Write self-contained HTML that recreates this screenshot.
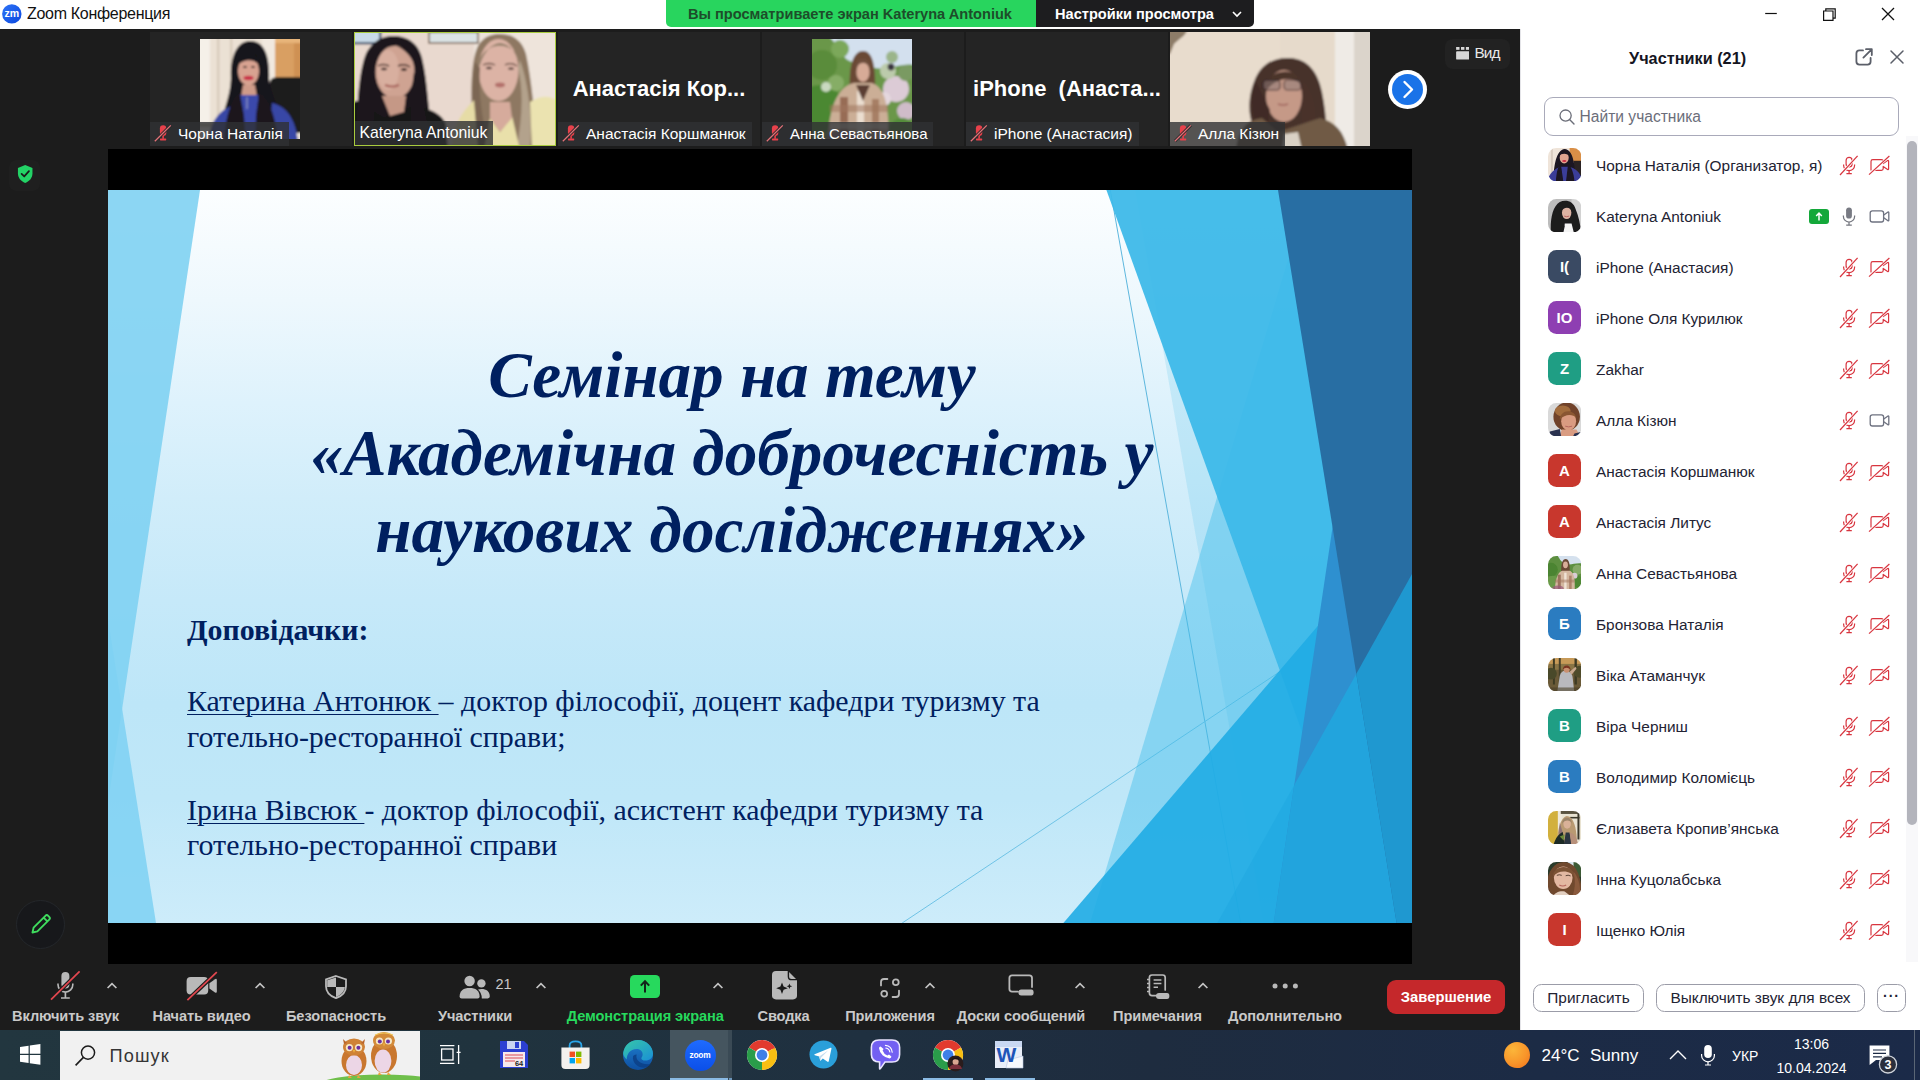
<!DOCTYPE html>
<html lang="ru">
<head>
<meta charset="utf-8">
<title>Zoom Конференция</title>
<style>
*{box-sizing:border-box;margin:0;padding:0}
html,body{width:1920px;height:1080px;overflow:hidden;background:#1c1c1c;font-family:"Liberation Sans",sans-serif;}
#root{position:relative;width:1920px;height:1080px;overflow:hidden;background:#1c1c1c;}
.abs{position:absolute}
.t{position:absolute;white-space:nowrap;line-height:1}
/* title bar */
#titlebar{left:0;top:0;width:1920px;height:29px;background:#fff}
/* main */
#main{left:0;top:29px;width:1520px;height:1001px;background:#1c1c1c}
/* panel */
#panel{left:1520px;top:29px;width:400px;height:1001px;background:#fff;border-left:1px solid #e4e4e8}
/* taskbar */
#taskbar{left:0;top:1030px;width:1920px;height:50px;background:#1f2c3b}
/* share */
#shareblack{left:108px;top:149px;width:1304px;height:815px;background:#000}
#slide{left:108px;top:190px;width:1304px;height:733px;overflow:hidden;background:linear-gradient(180deg,#fcfeff 0%,#eef8fd 15%,#def2fc 29%,#d1edfa 42%,#c6e9f9 56%,#bde6f8 70%,#bfe7f8 83%,#cdecfa 100%)}
/* thumbs */
.thumb{position:absolute;top:32px;width:202px;height:114.4px;background:#242424;overflow:hidden}
.nm{position:absolute;left:0;bottom:0;height:24px;background:rgba(47,49,51,.80);color:#fff;font-size:15.5px;line-height:24px;white-space:nowrap;padding:0 6px 0 28px}
.nm.nomic{padding-left:6px}
.bigname{position:absolute;left:0;right:0;top:44px;text-align:center;color:#fff;font-weight:bold;font-size:22px;white-space:nowrap;line-height:26px}

.stitle{position:absolute;left:0;width:1248px;text-align:center;font-family:"Liberation Serif",serif;font-weight:bold;font-style:italic;font-size:65.2px;line-height:77.25px;color:#002060;white-space:nowrap}
.sbody{position:absolute;left:79px;font-family:"Liberation Serif",serif;font-size:29.9px;line-height:36px;color:#002060;white-space:nowrap}
.sbody u{text-decoration-thickness:1.2px;text-underline-offset:3px}

.tl{position:absolute;top:1008px;width:200px;text-align:center;font-size:14.6px;line-height:16px;font-weight:bold;white-space:nowrap;letter-spacing:-0.1px}

.av{position:absolute;left:1547.8px;width:33.4px;height:33.4px;margin-top:.4px;border-radius:8.5px;color:#fff;font-weight:bold;font-size:15px;line-height:33.4px;text-align:center}
.pn{position:absolute;left:1596px;font-size:15.4px;line-height:20px;color:#232333;white-space:nowrap}
.pbtn{position:absolute;top:983.5px;height:28.5px;border:1px solid #9b9ca8;border-radius:8.5px;background:#fff;color:#232333;font-size:15.4px;line-height:26px;text-align:center;white-space:nowrap}
</style>
</head>
<body>
<div id="root">
<svg width="0" height="0" style="position:absolute"><defs><filter id="avb" x="-10%" y="-10%" width="120%" height="120%"><feGaussianBlur stdDeviation="0.45"/></filter></defs></svg>

<!-- ===== TITLE BAR ===== -->
<div id="titlebar" class="abs"></div>
<svg class="abs" style="left:2px;top:3px" width="21" height="21" viewBox="0 0 21 21"><defs><linearGradient id="zg" x1="0" y1="0" x2="1" y2="1"><stop offset="0" stop-color="#2f74f7"/><stop offset="1" stop-color="#0a47de"/></linearGradient></defs><circle cx="9.8" cy="10.9" r="9.7" fill="url(#zg)"/><text x="9.9" y="14.3" font-family="Liberation Sans" font-size="10.6" font-weight="bold" fill="#fff" text-anchor="middle">zm</text></svg>
<div class="t" id="ttl" style="left:27px;top:6.4px;font-size:16px;letter-spacing:-.3px;color:#111">Zoom Конференция</div>
<div class="abs" style="left:666px;top:0;width:370px;height:27px;background:#28d55e;border-radius:0 0 0 5px"></div>
<div class="t" id="ban1" style="left:688px;top:7px;font-size:14.6px;font-weight:bold;color:#1d4d2a">Вы просматриваете экран Kateryna Antoniuk</div>
<div class="abs" style="left:1036px;top:0;width:218px;height:27px;background:#1d1d1f;border-radius:0 0 5px 0"></div>
<div class="t" id="ban2" style="left:1055px;top:7px;font-size:14.6px;font-weight:bold;color:#fff">Настройки просмотра</div>
<svg class="abs" style="left:1231px;top:9px" width="12" height="10" viewBox="0 0 12 10"><path d="M2 3L6 7L10 3" fill="none" stroke="#fff" stroke-width="1.6"/></svg>
<svg class="abs" style="left:1760px;top:4px" width="140" height="20" viewBox="0 0 140 20"><path d="M5.2 9.5H16.8" stroke="#111" stroke-width="1.2"/><path d="M63.6 7H73V16.4H63.6Z M65.8 7V4.8H75.2V14.2H73" fill="none" stroke="#111" stroke-width="1.2"/><path d="M122 4L134 16M134 4L122 16" stroke="#111" stroke-width="1.3"/></svg>


<!-- ===== MAIN DARK AREA ===== -->
<div id="main" class="abs"></div>

<!-- ===== SHARED SCREEN ===== -->
<div id="shareblack" class="abs"></div>
<div id="slide" class="abs">
<svg class="abs" style="left:0;top:0" width="1304" height="733" viewBox="0 0 1304 733">
<defs>
<clipPath id="cR28"><polygon points="1274.7,0 1304,0 1304,733 1165.7,733"/></clipPath>
<clipPath id="cR29"><polygon points="1170,0 1304,0 1304,733 1288.6,733"/></clipPath>
</defs>
<!-- left facet -->
<polygon points="0,0 92,0 0,613" fill="#7fd1f2" fill-opacity=".9"/>
<polygon points="0,429.2 48,733 0,733" fill="#7fd1f2" fill-opacity=".88"/>
<!-- thin lines -->
<line x1="1002.3" y1="0" x2="1132.7" y2="733" stroke="#5db7de" stroke-width="1"/>
<line x1="1304" y1="393.7" x2="794.2" y2="733" stroke="#6fc3e6" stroke-width="1"/>
<!-- Rect23 / Rect25 light -->
<polygon points="1200.8,0 1304,0 1304,733 982,733" fill="#40bdeb" fill-opacity=".44"/>
<polygon points="1027.1,0 1304,0 1304,733 1155.7,733" fill="#40bdeb" fill-opacity=".18"/>
<!-- Rect27 mid blue -->
<polygon points="998.4,0 1304,0 1304,733 1263,733" fill="#3db9e9" fill-opacity=".94"/>
<!-- Tri23 big triangle -->
<polygon points="1304,326 1304,733 955.4,733" fill="#20ace4" fill-opacity=".9"/>
<!-- Tri27 subtle left part -->
<polygon points="1304,383.9 1304,733 1109.3,733" fill="#1aa3de" fill-opacity=".35"/>
<!-- Rect28 -->
<polygon points="1274.7,0 1304,0 1304,733 1165.7,733" fill="#2e90d0"/>
<polygon points="1304,383.9 1304,733 1109.3,733" fill="#22a4dd" clip-path="url(#cR28)"/>
<!-- Rect29 dark -->
<polygon points="1170,0 1304,0 1304,733 1288.6,733" fill="#286ea3"/>
<polygon points="1304,383.9 1304,733 1109.3,733" fill="#1f98d0" clip-path="url(#cR29)"/>
</svg>
<div class="stitle" style="top:147.4px">Семінар на тему</div>
<div class="stitle" style="top:224.6px">«Академічна доброчесність у</div>
<div class="stitle" style="top:301.9px">наукових дослідженнях»</div>
<div class="sbody" style="top:422px"><b>Доповідачки:</b></div>
<div class="sbody" style="top:493.2px"><u>Катерина Антонюк </u>– доктор філософії, доцент кафедри туризму та</div>
<div class="sbody" style="top:529.4px">готельно-ресторанної справи;</div>
<div class="sbody" style="top:601.9px"><u>Ірина Вівсюк </u>- доктор філософії, асистент кафедри туризму та</div>
<div class="sbody" style="top:636.9px">готельно-ресторанної справи</div>

</div>

<!-- ===== THUMBNAILS ===== -->

<!-- thumb 1 -->
<div class="thumb" style="left:150px">
<svg class="abs" style="left:50px;top:7px" width="100" height="100" viewBox="0 0 100 100">
<defs><filter id="bl1" x="-10%" y="-10%" width="120%" height="120%"><feGaussianBlur stdDeviation="1.1"/></filter></defs>
<g filter="url(#bl1)">
<rect x="-10" y="-10" width="120" height="120" fill="#ebe1d4"/>
<rect x="-10" y="-10" width="20" height="120" fill="#f5f0e9"/><rect x="17" y="-10" width="2.4" height="120" fill="#d8cbbb"/><rect x="30" y="-10" width="2.4" height="120" fill="#d9ccbc"/><rect x="62" y="-10" width="14" height="60" fill="#f1e9df"/>
<rect x="75" y="-10" width="40" height="50" fill="#d99f62"/><rect x="75" y="-10" width="40" height="14" fill="#e8b57a"/><rect x="94" y="4" width="20" height="36" fill="#cf9152"/>
<path d="M70 44Q70 38 78 38H110V94H70Z" fill="#1e1b1c"/>
<rect x="-10" y="84" width="40" height="4" fill="#c9bba8"/>
<path d="M31 40C30 12 40 2 50 2C62 2 70 12 69 40C72 60 82 72 84 94L20 94C22 72 30 60 31 40Z" fill="#19131a"/>
<ellipse cx="48.5" cy="32" rx="10.5" ry="14.5" fill="#d8a391"/>
<path d="M36 28C38 9 61 9 62 29C56 19 43 19 36 28Z" fill="#19131a"/>
<ellipse cx="45" cy="28" rx="2" ry="1" fill="#3a2a2a"/><ellipse cx="53" cy="28" rx="2" ry="1" fill="#3a2a2a"/>
<ellipse cx="48.5" cy="39" rx="5" ry="2.2" fill="#c92f46"/>
<path d="M43 46H55L57 58H41Z" fill="#cf9b89"/>
<path d="M8 104C10 78 24 68 36 66L34 104Z" fill="#3947a6"/><path d="M72 64C88 68 96 82 98 104L68 104Z" fill="#3947a6"/>
<path d="M40 56L58 56L64 104L34 104Z" fill="#3b49ab"/>
<path d="M24 104C25 76 32 58 40 54L44 76L46 104Z" fill="#1b161b"/><path d="M78 104C76 76 68 58 59 54L56 76L55 104Z" fill="#1b161b"/>
<path d="M47 58V70" stroke="#c9c9d6" stroke-width=".8"/>
</g></svg>
<div class="nm"><svg class="abs" style="left:4px;top:2px" width="19" height="19" viewBox="0 0 19 19"><rect x="5.9" y="1.3" width="6.4" height="10.6" rx="3.2" fill="#e8414b"/><rect x="8.3" y="11.6" width="1.6" height="3.2" fill="#e8414b"/><rect x="6" y="14.4" width="6.2" height="2" rx=".6" fill="#e8414b"/><path d="M0.8 17.2L16.8 1.4" stroke="#2a2a2a" stroke-width="3"/><path d="M0.8 17.2L16.8 1.4" stroke="#e2727a" stroke-width="1.3"/></svg>Чорна Наталія</div>
</div>
<!-- thumb 2 active -->
<div class="thumb" style="left:354px;background:#e6d6cb">
<svg class="abs" style="left:0;top:0" width="202" height="115" viewBox="0 0 202 115">
<defs><filter id="bl2" x="-10%" y="-10%" width="120%" height="120%"><feGaussianBlur stdDeviation="0.9"/></filter></defs>
<g filter="url(#bl2)">
<rect x="-10" y="-10" width="222" height="135" fill="#e9d9cf"/>
<rect x="120" y="-10" width="92" height="90" fill="#eee4db"/>
<rect x="-10" y="-10" width="36" height="21" fill="#c9dbe8"/><rect x="-10" y="10" width="36" height="2.4" fill="#4e5f78"/><rect x="25" y="-10" width="2.4" height="22" fill="#4e5f78"/>
<rect x="75" y="0" width="49" height="11" fill="#dbe4e6" stroke="#6f5b4a" stroke-width="1.4"/>
<!-- left woman -->
<path d="M3 115C2 70 6 30 14 18C22 6 32 4 40 4C52 4 64 10 68 26C74 50 74 80 80 115Z" fill="#1b181b"/>
<ellipse cx="41" cy="40" rx="19.5" ry="26.5" fill="#cfa392"/>
<ellipse cx="34" cy="38" rx="11" ry="20" fill="#d9b2a2" opacity=".8"/>
<path d="M20 34C22 8 60 6 62 36C56 20 46 14 38 13C30 14 24 22 20 34Z" fill="#1b181b"/>
<path d="M24 34Q29 31 35 34" stroke="#3a2622" stroke-width="1.4" fill="none"/><path d="M44 34Q50 31 56 35" stroke="#3a2622" stroke-width="1.4" fill="none"/>
<ellipse cx="30" cy="37" rx="3" ry="1.3" fill="#2a1c1c"/><ellipse cx="50" cy="37.6" rx="3" ry="1.3" fill="#2a1c1c"/>
<path d="M31 53Q38 56 45 53" stroke="#a8645c" stroke-width="2" fill="none"/>
<path d="M-4 118L-4 72C4 66 10 70 14 76L30 86L60 74C76 76 88 82 92 92L94 118Z" fill="#151316"/>
<path d="M28 64L52 64L50 80L36 84Z" fill="#c59886"/>
<path d="M4 115C0 90 4 60 10 40L22 60L18 115Z" fill="#1b181b"/><path d="M60 40C68 60 70 80 80 115L58 115L56 70Z" fill="#1b181b"/>
<!-- right woman -->
<path d="M120 118C116 70 116 30 124 14C130 4 138 2 146 2C158 2 168 8 172 22C178 50 180 80 184 118Z" fill="#8e7862"/>
<ellipse cx="144.500" cy="38" rx="20" ry="31" fill="#dcb3a5"/>
<path d="M124 40C122 6 168 4 168 40C164 22 156 12 146 11C136 12 128 22 124 40Z" fill="#93806a"/>
<path d="M121 30C116 60 118 90 126 118L136 118C128 90 124 60 126 36Z" fill="#7c6652"/>
<path d="M166 28C176 56 178 90 176 118L162 118C168 90 170 60 164 36Z" fill="#b3a28c"/>
<path d="M129 33Q135 30 141 33" stroke="#5a4238" stroke-width="1.3" fill="none"/><path d="M151 33Q157 30 163 34" stroke="#5a4238" stroke-width="1.3" fill="none"/>
<ellipse cx="135" cy="36" rx="3" ry="1.2" fill="#4a3630"/><ellipse cx="157" cy="36.600" rx="3" ry="1.2" fill="#4a3630"/>
<ellipse cx="146" cy="53" rx="5" ry="2.4" fill="#b3706a"/>
<path d="M98 118C98 98 104 84 120 68L124 118Z" fill="#e6dca6"/><path d="M176 70C188 62 198 64 206 70L206 118L178 118Z" fill="#ebe3b0"/>
<path d="M130 118L136 86L146 100L158 84L166 118Z" fill="#e9e0aa"/>
<path d="M136 70L156 70L158 86L146 100L136 86Z" fill="#d6ab9c"/>
</g></svg>
<div class="abs" style="left:0;top:0;width:202px;height:114.4px;border:1.5px solid #a9cb3e"></div>
<div class="nm nomic" style="left:1px;bottom:1px;height:24px;font-size:15.75px;padding-left:4.5px">Kateryna Antoniuk</div>
</div>
<!-- thumb 3 -->
<div class="thumb" style="left:558px">
<div class="bigname">Анастасія Кор...</div>
<div class="nm"><svg class="abs" style="left:4px;top:2px" width="19" height="19" viewBox="0 0 19 19"><rect x="5.9" y="1.3" width="6.4" height="10.6" rx="3.2" fill="#e8414b"/><rect x="8.3" y="11.6" width="1.6" height="3.2" fill="#e8414b"/><rect x="6" y="14.4" width="6.2" height="2" rx=".6" fill="#e8414b"/><path d="M0.8 17.2L16.8 1.4" stroke="#2a2a2a" stroke-width="3"/><path d="M0.8 17.2L16.8 1.4" stroke="#e2727a" stroke-width="1.3"/></svg>Анастасія Коршманюк</div>
</div>
<!-- thumb 4 -->
<div class="thumb" style="left:762px">
<svg class="abs" style="left:50px;top:7px" width="100" height="100" viewBox="0 0 100 100">
<defs><filter id="bl4" x="-10%" y="-10%" width="120%" height="120%"><feGaussianBlur stdDeviation="1.1"/></filter></defs>
<g filter="url(#bl4)">
<rect x="-10" y="-10" width="120" height="120" fill="#6a9748"/>
<path d="M12 -10L110 -10L110 28C90 20 78 34 60 28C44 22 36 26 30 14C26 6 18 0 12 -10Z" fill="#d3e0ee"/>
<circle cx="10" cy="26" r="15" fill="#5a8c3a"/><circle cx="8" cy="70" r="24" fill="#4c8832"/><circle cx="28" cy="10" r="9" fill="#7ba85a"/><circle cx="24" cy="44" r="8" fill="#86ad66"/><circle cx="14" cy="48" r="5" fill="#c9d9c0"/>
<circle cx="84" cy="50" r="13" fill="#dccbd6"/><circle cx="94" cy="72" r="9" fill="#cfbcc9"/><circle cx="76" cy="32" r="8" fill="#bccbab"/><circle cx="90" cy="92" r="13" fill="#548e3a"/><circle cx="72" cy="60" r="7" fill="#e4d7de"/><circle cx="94" cy="34" r="8" fill="#7a9a62"/><circle cx="80" cy="18" r="6" fill="#9bb58a"/>
<circle cx="79" cy="28" r="3.4" fill="#3b3540"/>
<path d="M38 56C36 24 42 12 51 12C60 12 64 24 63 56Z" fill="#6a4836"/>
<ellipse cx="51" cy="33" rx="6.6" ry="10" fill="#d7ab97"/>
<path d="M43 30C44 16 58 16 59 31C56 22 47 22 43 30Z" fill="#70503c"/>
<path d="M16 104C16 62 30 46 42 44L60 44C72 48 78 66 76 104Z" fill="#cbae96"/>
<rect x="28" y="58" width="8" height="46" fill="#85563f" opacity=".75"/><rect x="45" y="52" width="7" height="52" fill="#f1e6da" opacity=".85"/><rect x="60" y="60" width="7" height="44" fill="#94654c" opacity=".65"/><rect x="18" y="66" width="58" height="7" fill="#a1765e" opacity=".55"/><rect x="18" y="84" width="58" height="6" fill="#f3e9de" opacity=".65"/>
<path d="M44 46L51 62L58 46Z" fill="#5a3c30"/>
<ellipse cx="30" cy="98" rx="16" ry="6" fill="#7d5a72" opacity=".7"/>
</g></svg>
<div class="nm"><svg class="abs" style="left:4px;top:2px" width="19" height="19" viewBox="0 0 19 19"><rect x="5.9" y="1.3" width="6.4" height="10.6" rx="3.2" fill="#e8414b"/><rect x="8.3" y="11.6" width="1.6" height="3.2" fill="#e8414b"/><rect x="6" y="14.4" width="6.2" height="2" rx=".6" fill="#e8414b"/><path d="M0.8 17.2L16.8 1.4" stroke="#2a2a2a" stroke-width="3"/><path d="M0.8 17.2L16.8 1.4" stroke="#e2727a" stroke-width="1.3"/></svg><span style="font-size:15px">Анна Севастьянова</span></div>
</div>
<!-- thumb 5 -->
<div class="thumb" style="left:966px">
<div class="bigname">iPhone&nbsp; (Анаста...</div>
<div class="nm"><svg class="abs" style="left:4px;top:2px" width="19" height="19" viewBox="0 0 19 19"><rect x="5.9" y="1.3" width="6.4" height="10.6" rx="3.2" fill="#e8414b"/><rect x="8.3" y="11.6" width="1.6" height="3.2" fill="#e8414b"/><rect x="6" y="14.4" width="6.2" height="2" rx=".6" fill="#e8414b"/><path d="M0.8 17.2L16.8 1.4" stroke="#2a2a2a" stroke-width="3"/><path d="M0.8 17.2L16.8 1.4" stroke="#e2727a" stroke-width="1.3"/></svg>iPhone (Анастасия)</div>
</div>
<!-- thumb 6 -->
<div class="thumb" style="left:1170px;width:200px;background:#e4d8c8">
<svg class="abs" style="left:0;top:0" width="200" height="115" viewBox="0 0 200 115">
<defs><filter id="bl6" x="-10%" y="-10%" width="120%" height="120%"><feGaussianBlur stdDeviation="0.9"/></filter></defs>
<g filter="url(#bl6)">
<rect x="-10" y="-10" width="220" height="135" fill="#e6dacb"/>
<rect x="-10" y="-10" width="120" height="135" fill="#e8dccd"/>
<rect x="165" y="-10" width="19" height="135" fill="#efebe6"/><rect x="184" y="-10" width="26" height="135" fill="#dbd4cb"/>
<path d="M-4 -4L18 -4C16 4 10 6 4 12L0 22L-4 22Z" fill="#8d7c68"/>
<path d="M84 96C76 80 80 60 84 50C90 32 104 25 120 26C138 27 148 40 152 60C156 80 158 100 154 118L96 118C90 110 86 104 84 96Z" fill="#47312a"/>
<ellipse cx="114" cy="64" rx="18" ry="26" fill="#c59987"/>
<path d="M95 60C94 36 130 30 136 58C128 44 108 42 95 60Z" fill="#4b342c"/>
<path d="M86 50C78 70 82 92 96 104L100 78Z" fill="#402b25"/><path d="M134 50C146 64 148 90 142 110L132 88Z" fill="#4a332c"/>
<rect x="93" y="48" width="17" height="10" rx="3.4" fill="#8d7a78" opacity=".55" stroke="#35262a" stroke-width="1.7"/><rect x="114" y="48" width="17" height="10" rx="3.4" fill="#8d7a78" opacity=".5" stroke="#35262a" stroke-width="1.7"/>
<path d="M108 72Q113 74 118 72" stroke="#a0645c" stroke-width="1.6" fill="none"/>
<path d="M66 118C68 96 78 88 92 86L108 100L150 86C166 90 174 100 178 118Z" fill="#6f5a44"/>
<path d="M112 118L114 102L128 100L132 118Z" fill="#dad2c6"/>
</g></svg>
<div class="nm"><svg class="abs" style="left:4px;top:2px" width="19" height="19" viewBox="0 0 19 19"><rect x="5.9" y="1.3" width="6.4" height="10.6" rx="3.2" fill="#e8414b"/><rect x="8.3" y="11.6" width="1.6" height="3.2" fill="#e8414b"/><rect x="6" y="14.4" width="6.2" height="2" rx=".6" fill="#e8414b"/><path d="M0.8 17.2L16.8 1.4" stroke="#2a2a2a" stroke-width="3"/><path d="M0.8 17.2L16.8 1.4" stroke="#e2727a" stroke-width="1.3"/></svg>Алла Кізюн</div>
</div>
<!-- next arrow -->
<div class="abs" style="left:1387.9px;top:70px;width:39.2px;height:39.2px;border-radius:50%;background:#fff"></div>
<div class="abs" style="left:1391.7px;top:73.800px;width:31.6px;height:31.6px;border-radius:50%;background:#1a73e8"></div>
<svg class="abs" style="left:1390px;top:72px" width="35" height="35" viewBox="0 0 35 35"><path d="M14.5 10L22 17.5L14.5 25" fill="none" stroke="#fff" stroke-width="2.4" stroke-linecap="round" stroke-linejoin="round"/></svg>
<!-- view btn -->
<div class="abs" style="left:1445px;top:39px;width:65px;height:30px;border-radius:8px;background:#222"></div>
<svg class="abs" style="left:1455.8px;top:47px" width="13.4" height="12.6" viewBox="0 0 14 13.400"><rect x="0" y="0" width="3.6" height="3" fill="#d8d8d8"/><rect x="5.2" y="0" width="3.6" height="3" fill="#d8d8d8"/><rect x="10.4" y="0" width="3.6" height="3" fill="#d8d8d8"/><rect x="0" y="4.4" width="14" height="9" rx="1" fill="#d8d8d8"/></svg>
<div class="t" style="left:1474.5px;top:45px;font-size:15.4px;letter-spacing:-.9px;color:#e8e8e8">Вид</div>
<!-- shield -->
<div class="abs" style="left:9px;top:159.500px;width:31px;height:31px;border-radius:7px;background:#1f1f1f"></div>
<svg class="abs" style="left:15.8px;top:164px" width="18.4" height="20.2" viewBox="0 0 21 23"><path d="M10.5 1.2L18.8 4.4V10.5C18.8 15.6 15.6 19.6 10.5 21.6C5.4 19.6 2.2 15.6 2.2 10.5V4.4Z" fill="#23d366"/><path d="M6.4 11.2L9.4 14.2L14.8 8.2" fill="none" stroke="#1a1a1a" stroke-width="2" stroke-linecap="round" stroke-linejoin="round"/></svg>
<!-- pencil -->
<div class="abs" style="left:16px;top:900px;width:49px;height:49px;border-radius:50%;background:#17181b;border:1.5px solid #24272b"></div>
<svg class="abs" style="left:29px;top:912px" width="24" height="24" viewBox="0 0 24 24"><path d="M3.5 20.5L4.6 15.6L16.4 3.8C17.2 3 18.4 3 19.2 3.8L20.2 4.8C21 5.6 21 6.8 20.2 7.6L8.4 19.4Z M14.6 5.6L18.4 9.4" fill="none" stroke="#3fdc5e" stroke-width="1.9" stroke-linejoin="round"/></svg>


<!-- ===== TOOLBAR ===== -->

<div class="abs" style="left:0;top:964px;width:1520px;height:66px;background:#1c1c1c"></div>
<!-- mic -->
<svg class="abs" style="left:48px;top:969px" width="36" height="34" viewBox="0 0 36 34"><rect x="13.4" y="3" width="8" height="16.5" rx="4" fill="#b9b9b9"/><path d="M10 14.5v1.2a7.4 7.4 0 0 0 14.8 0v-1.2" fill="none" stroke="#b9b9b9" stroke-width="1.6"/><path d="M17.4 23.5v5.2M13 29h8.8" stroke="#b9b9b9" stroke-width="1.7"/><path d="M3 30.6L31.6 2.4" stroke="#1c1c1c" stroke-width="4"/><path d="M3 30.6L31.6 2.4" stroke="#e2474f" stroke-width="1.7"/></svg>
<svg class="abs" style="left:106px;top:981px" width="12" height="9" viewBox="0 0 12 9"><path d="M1.6 7L6 2.6L10.4 7" fill="none" stroke="#c4c4c4" stroke-width="1.7"/></svg><div class="tl" style="left:-34.5px;color:#c9c9c9">Включить звук</div>
<!-- cam -->
<svg class="abs" style="left:184px;top:969px" width="36" height="34" viewBox="0 0 36 34"><rect x="2.6" y="8" width="21.6" height="17.6" rx="4" fill="#b9b9b9"/><path d="M25.4 14.2L31 10.2Q32.8 9.2 32.8 11.2V22.4Q32.8 24.4 31 23.4L25.4 19.4Z" fill="#b9b9b9"/><path d="M3.4 31.2L32.8 3.2" stroke="#1c1c1c" stroke-width="4"/><path d="M3.4 31.2L32.8 3.2" stroke="#e2474f" stroke-width="1.7"/></svg>
<svg class="abs" style="left:254px;top:981px" width="12" height="9" viewBox="0 0 12 9"><path d="M1.6 7L6 2.6L10.4 7" fill="none" stroke="#c4c4c4" stroke-width="1.7"/></svg><div class="tl" style="left:101.5px;color:#c9c9c9">Начать видео</div>
<!-- shield -->
<svg class="abs" style="left:324px;top:975px" width="24" height="24" viewBox="0 0 24 24"><path d="M12 1L22 4.4V11.2C22 16.8 18 21 12 23.2C6 21 2 16.8 2 11.2V4.4Z" fill="none" stroke="#b9b9b9" stroke-width="1.8"/><path d="M12 2.4V12H3.2V5.2Z" fill="#b9b9b9"/><path d="M12 12H20.8C20.4 16.6 17 20 12 22Z" fill="#b9b9b9"/></svg>
<div class="tl" style="left:236px;color:#c9c9c9">Безопасность</div>
<!-- participants -->
<svg class="abs" style="left:459px;top:975px" width="32" height="24" viewBox="0 0 32 24"><circle cx="10.6" cy="6" r="5.2" fill="#b9b9b9"/><path d="M0.6 21.5C0.6 15.5 4.6 13 10.6 13C16.6 13 20.6 15.5 20.6 21.5Q20.6 23.4 18.6 23.4H2.6Q0.6 23.4 0.6 21.5Z" fill="#b9b9b9"/><circle cx="22.4" cy="8.4" r="4.2" fill="#b9b9b9"/><path d="M22.8 23.4Q22.6 17.6 19 14.6C20 14.2 21.2 14 22.4 14C27.4 14 30.8 16.4 30.8 21.6Q30.8 23.4 28.8 23.4Z" fill="#b9b9b9"/></svg>
<div class="t" style="left:495.5px;top:976.5px;font-size:14.5px;color:#c9c9c9">21</div>
<svg class="abs" style="left:535px;top:981px" width="12" height="9" viewBox="0 0 12 9"><path d="M1.6 7L6 2.6L10.4 7" fill="none" stroke="#c4c4c4" stroke-width="1.7"/></svg><div class="tl" style="left:375px;color:#c9c9c9">Участники</div>
<!-- share -->
<div class="abs" style="left:630px;top:975px;width:30px;height:22.5px;border-radius:4.5px;background:#27d95d"></div>
<svg class="abs" style="left:630px;top:975px" width="30" height="23" viewBox="0 0 30 23"><path d="M15 17.4V6.6M10.8 10.6L15 6.2L19.2 10.6" fill="none" stroke="#13251a" stroke-width="2" stroke-linejoin="miter"/></svg>
<svg class="abs" style="left:712px;top:981px" width="12" height="9" viewBox="0 0 12 9"><path d="M1.6 7L6 2.6L10.4 7" fill="none" stroke="#c4c4c4" stroke-width="1.7"/></svg><div class="tl" style="left:545.3px;color:#27d95d">Демонстрация экрана</div>
<!-- summary -->
<svg class="abs" style="left:771px;top:970px" width="27" height="30" viewBox="0 0 27 30"><path d="M5 1H17L26 10V25.6Q26 29.4 22 29.4H5Q1 29.4 1 25.6V5Q1 1 5 1Z" fill="#b9b9b9"/><path d="M17.4 0.6V6.4Q17.4 9.6 20.6 9.6H26.4" fill="none" stroke="#1a1a1a" stroke-width="1.4"/><path d="M11 12.4L12.6 16.6L16.8 18.2L12.6 19.8L11 24L9.4 19.8L5.2 18.2L9.4 16.6Z" fill="#1a1a1a"/><path d="M18.4 13.4L19.2 15.4L21.2 16.2L19.2 17L18.4 19L17.6 17L15.6 16.2L17.6 15.4Z" fill="#1a1a1a"/></svg>
<div class="tl" style="left:683.5px;color:#c9c9c9">Сводка</div>
<!-- apps -->
<svg class="abs" style="left:879px;top:977px" width="22" height="22" viewBox="0 0 22 22"><path d="M8.4 2H5Q2 2 2 5V8.4M13.6 20H17Q20 20 20 17V13.6" fill="none" stroke="#b9b9b9" stroke-width="1.8" stroke-linecap="round"/><circle cx="16.8" cy="5.2" r="2.9" fill="none" stroke="#b9b9b9" stroke-width="1.8"/><circle cx="5.2" cy="16.8" r="2.9" fill="none" stroke="#b9b9b9" stroke-width="1.8"/></svg>
<svg class="abs" style="left:924px;top:981px" width="12" height="9" viewBox="0 0 12 9"><path d="M1.6 7L6 2.6L10.4 7" fill="none" stroke="#c4c4c4" stroke-width="1.7"/></svg><div class="tl" style="left:790px;color:#c9c9c9">Приложения</div>
<!-- whiteboards -->
<svg class="abs" style="left:1007px;top:973px" width="28" height="24" viewBox="0 0 28 24"><path d="M11 18.6H5Q2.4 18.6 2.4 16V5Q2.4 2.4 5 2.4H22.4Q25 2.4 25 5V14" fill="none" stroke="#b9b9b9" stroke-width="1.8" stroke-linecap="round"/><path d="M11.4 19.4Q11.4 16.4 14.4 16.4H24.4Q26.6 16.4 26.6 19.4Q26.6 22.4 24.4 22.4H14.4Q11.4 22.4 11.4 19.4Z" fill="#b9b9b9"/></svg>
<svg class="abs" style="left:1074px;top:981px" width="12" height="9" viewBox="0 0 12 9"><path d="M1.6 7L6 2.6L10.4 7" fill="none" stroke="#c4c4c4" stroke-width="1.7"/></svg><div class="tl" style="left:921px;color:#c9c9c9">Доски сообщений</div>
<!-- notes -->
<svg class="abs" style="left:1145px;top:973px" width="26" height="27" viewBox="0 0 26 27"><path d="M12 22.6H7Q4.4 22.6 4.4 20V4.6Q4.4 2 7 2H17.6Q20.2 2 20.2 4.6V17" fill="none" stroke="#b9b9b9" stroke-width="1.7" stroke-linecap="round"/><path d="M2 6.4H5M2 10.4H5M2 14.4H5M2 18.4H5" stroke="#b9b9b9" stroke-width="1.5"/><path d="M8.6 7H16.4M8.6 10.6H16.4M8.6 14.2H13" stroke="#b9b9b9" stroke-width="1.5"/><path d="M11 23Q11 20 14 20H22Q24.4 20 24.4 23Q24.4 26 22 26H14Q11 26 11 23Z" fill="#b9b9b9"/></svg>
<svg class="abs" style="left:1197px;top:981px" width="12" height="9" viewBox="0 0 12 9"><path d="M1.6 7L6 2.6L10.4 7" fill="none" stroke="#c4c4c4" stroke-width="1.7"/></svg><div class="tl" style="left:1057.5px;color:#c9c9c9">Примечания</div>
<!-- more -->
<svg class="abs" style="left:1270px;top:982px" width="30" height="8" viewBox="0 0 30 8"><circle cx="5" cy="4" r="2.5" fill="#b9b9b9"/><circle cx="15.2" cy="4" r="2.5" fill="#b9b9b9"/><circle cx="25.4" cy="4" r="2.5" fill="#b9b9b9"/></svg>
<div class="tl" style="left:1185px;color:#c9c9c9">Дополнительно</div>
<!-- end -->
<div class="abs" style="left:1387px;top:980px;width:118px;height:34px;border-radius:9px;background:#c5282b"></div>
<div class="t" style="left:1387px;top:990px;width:118px;text-align:center;font-size:14.8px;font-weight:bold;color:#fff">Завершение</div>


<!-- ===== PARTICIPANTS PANEL ===== -->
<div id="panel" class="abs"></div>

<div class="t" id="ptitle" style="left:1629px;top:49.5px;font-size:16.3px;font-weight:bold;color:#15151f">Участники (21)</div>
<svg class="abs" style="left:1854px;top:47px" width="20" height="20" viewBox="0 0 20 20"><path d="M9 3.4H5.4Q2.4 3.4 2.4 6.4V14.6Q2.4 17.6 5.4 17.6H13.6Q16.6 17.6 16.6 14.6V11" fill="none" stroke="#5b5f69" stroke-width="1.8" stroke-linecap="round"/><path d="M12 2.2H17.8V8M17.4 2.6L9.4 10.6" fill="none" stroke="#5b5f69" stroke-width="1.8" stroke-linecap="round" stroke-linejoin="round"/></svg>
<svg class="abs" style="left:1889px;top:49px" width="16" height="16" viewBox="0 0 16 16"><path d="M2 2L14 14M14 2L2 14" stroke="#5b5f69" stroke-width="1.5" stroke-linecap="round"/></svg>
<div class="abs" style="left:1544px;top:97px;width:355px;height:39px;border:1px solid #a9aaba;border-radius:9px;background:#fff"></div>
<svg class="abs" style="left:1558px;top:108px" width="18" height="18" viewBox="0 0 18 18"><circle cx="7.6" cy="7.6" r="5.6" fill="none" stroke="#6a6d78" stroke-width="1.3"/><path d="M11.8 11.8L16 16" stroke="#6a6d78" stroke-width="1.4" stroke-linecap="round"/></svg>
<div class="t" id="psearch" style="left:1579.5px;top:108.5px;font-size:15.6px;color:#6b6e7a">Найти участника</div>
<div class="abs" style="left:1907px;top:140.5px;width:10px;height:684.5px;border-radius:5px;background:#b3b4bc"></div>
<div class="abs" style="left:1906px;top:136px;width:12px;height:826px;background:#f8f8fa;z-index:0"></div>
<div class="abs" style="left:1907px;top:140.5px;width:10px;height:684.5px;border-radius:5px;background:#b3b4bc"></div>

<svg class="abs" style="left:1547.8px;top:147.6px" width="33.4" height="33.4" viewBox="0 0 34 34"><defs><clipPath id="av0"><rect width="34" height="34" rx="8.5"/></clipPath></defs><g clip-path="url(#av0)"><g filter="url(#avb)"><rect x="-3" y="-3" width="40" height="40" fill="#efe4d9"/><rect x="3" y="-3" width="2" height="40" fill="#d9ccc0"/><rect x="22" y="-3" width="15" height="17" fill="#d98f46"/><rect x="26" y="13" width="11" height="24" fill="#2b2422"/>
<path d="M5 37C6 18 8 2 17 1C26 2 27 16 29 37Z" fill="#1c1520"/><ellipse cx="16.5" cy="10" rx="4.6" ry="5.8" fill="#e0a590"/><path d="M11 8C12 1.500 22 1.500 22.5 9C20 5 14 5 11 8Z" fill="#1c1520"/><ellipse cx="16.6" cy="13.2" rx="2.2" ry="1" fill="#cf2f45"/>
<path d="M-2 37C0 26 8 20 13 19L21 19C27 20 34 24 36 37Z" fill="#3b3d99"/><path d="M8 37C8 24 11 17 13 16L16 37Z" fill="#1c1520"/><path d="M27 37C27 24 22 17 20.500 16L18 37Z" fill="#1c1520"/></g></g></svg>
<div class="pn" style="top:155.5px">Чорна Наталія (Организатор, я)</div>
<svg class="abs" style="left:1839px;top:155px" width="20" height="21" viewBox="0 0 20 21"><rect x="7.1" y="2.4" width="6" height="9.6" rx="3" fill="none" stroke="#d8353f" stroke-width="1.2"/><path d="M4.6 9.4v.8a5.5 5.5 0 0 0 11 0v-.8" fill="none" stroke="#d8353f" stroke-width="1.2"/><path d="M10.1 15.8v2.6M7.4 18.6h5.4" stroke="#d8353f" stroke-width="1.2"/><path d="M1 20L18.6 0.8" stroke="#fff" stroke-width="2.6"/><path d="M1 20L18.6 0.8" stroke="#d8353f" stroke-width="1.2"/></svg>
<svg class="abs" style="left:1868px;top:155px" width="23" height="21" viewBox="0 0 23 21"><path d="M3 15.6V6.4Q3 4.6 4.8 4.6H13.4Q15.2 4.6 15.2 6.4V8.6L19.6 5.6Q20.6 5 20.6 6.2V13.8Q20.6 15 19.6 14.4L15.2 11.4V13.6Q15.2 15.4 13.4 15.4H6" fill="none" stroke="#d8353f" stroke-width="1.2" stroke-linejoin="round"/><path d="M1 19.6L21.4 1" stroke="#fff" stroke-width="2.6"/><path d="M1 19.6L21.4 1" stroke="#d8353f" stroke-width="1.2"/></svg>
<svg class="abs" style="left:1547.8px;top:198.6px" width="33.4" height="33.4" viewBox="0 0 34 34"><defs><clipPath id="av1"><rect width="34" height="34" rx="8.5"/></clipPath></defs><g clip-path="url(#av1)"><g filter="url(#avb)"><rect x="-3" y="-3" width="40" height="40" fill="#bcbcbc"/><rect x="24" y="-3" width="13" height="40" fill="#d2d2d2"/>
<path d="M3 37C2 22 4 8 12 3C18 0 26 2 28 10C32 20 34 30 33 37Z" fill="#1d1b1f"/><ellipse cx="19" cy="14" rx="4.8" ry="6.4" fill="#dcb3a3"/><path d="M13 13C13 4 25 4 25 14C23 8 17 7 13 13Z" fill="#1d1b1f"/><path d="M16.500 17.400Q19 18.600 21.500 17.400" stroke="#b35a5a" stroke-width=".9" fill="none"/>
<path d="M14 37L17 25L24 25L27 37Z" fill="#f4f4f4"/><path d="M12 37C12 28 14 22 16 20L17 28L15 37Z" fill="#1d1b1f"/></g></g></svg>
<div class="pn" style="top:206.5px">Kateryna Antoniuk</div>
<svg class="abs" style="left:1841px;top:206px" width="16" height="21" viewBox="0 0 16 21"><rect x="5.1" y="1.4" width="5.8" height="11.2" rx="2.9" fill="#787a83"/><path d="M2.4 9.4v1a5.600 5.600 0 0 0 11.200 0v-1" fill="none" stroke="#74767f" stroke-width="1.25"/><path d="M8 16.2v2.600M5.200 19h5.600" stroke="#74767f" stroke-width="1.25"/></svg>
<svg class="abs" style="left:1868px;top:206px" width="23" height="21" viewBox="0 0 23 21"><rect x="2.2" y="4.8" width="13.4" height="11.2" rx="2.2" fill="none" stroke="#6e7280" stroke-width="1.3"/><path d="M15.8 9L20 6Q20.8 5.6 20.8 6.6V14.2Q20.8 15.2 20 14.8L15.8 11.8" fill="none" stroke="#6e7280" stroke-width="1.3" stroke-linejoin="round"/></svg>
<div class="abs" style="left:1809px;top:208.5px;width:19.8px;height:15px;border-radius:3px;background:#14a83a"></div><svg class="abs" style="left:1809px;top:208.5px" width="21" height="15" viewBox="0 0 21 15"><path d="M10 11.6V4.400M7.200 7L10 4L12.800 7" fill="none" stroke="#fff" stroke-width="1.5"/></svg>
<div class="av" style="top:249.3px;background:#3a4a63">I(</div>
<div class="pn" style="top:257.6px">iPhone (Анастасия)</div>
<svg class="abs" style="left:1839px;top:257px" width="20" height="21" viewBox="0 0 20 21"><rect x="7.1" y="2.4" width="6" height="9.6" rx="3" fill="none" stroke="#d8353f" stroke-width="1.2"/><path d="M4.6 9.4v.8a5.5 5.5 0 0 0 11 0v-.8" fill="none" stroke="#d8353f" stroke-width="1.2"/><path d="M10.1 15.8v2.6M7.4 18.6h5.4" stroke="#d8353f" stroke-width="1.2"/><path d="M1 20L18.6 0.8" stroke="#fff" stroke-width="2.6"/><path d="M1 20L18.6 0.8" stroke="#d8353f" stroke-width="1.2"/></svg>
<svg class="abs" style="left:1868px;top:257px" width="23" height="21" viewBox="0 0 23 21"><path d="M3 15.6V6.4Q3 4.6 4.8 4.6H13.4Q15.2 4.6 15.2 6.4V8.6L19.6 5.6Q20.6 5 20.6 6.2V13.8Q20.6 15 19.6 14.4L15.2 11.4V13.6Q15.2 15.4 13.4 15.4H6" fill="none" stroke="#d8353f" stroke-width="1.2" stroke-linejoin="round"/><path d="M1 19.6L21.4 1" stroke="#fff" stroke-width="2.6"/><path d="M1 19.6L21.4 1" stroke="#d8353f" stroke-width="1.2"/></svg>
<div class="av" style="top:300.3px;background:#8e3fb2">IO</div>
<div class="pn" style="top:308.6px">iPhone Оля Курилюк</div>
<svg class="abs" style="left:1839px;top:308px" width="20" height="21" viewBox="0 0 20 21"><rect x="7.1" y="2.4" width="6" height="9.6" rx="3" fill="none" stroke="#d8353f" stroke-width="1.2"/><path d="M4.6 9.4v.8a5.5 5.5 0 0 0 11 0v-.8" fill="none" stroke="#d8353f" stroke-width="1.2"/><path d="M10.1 15.8v2.6M7.4 18.6h5.4" stroke="#d8353f" stroke-width="1.2"/><path d="M1 20L18.6 0.8" stroke="#fff" stroke-width="2.6"/><path d="M1 20L18.6 0.8" stroke="#d8353f" stroke-width="1.2"/></svg>
<svg class="abs" style="left:1868px;top:308px" width="23" height="21" viewBox="0 0 23 21"><path d="M3 15.6V6.4Q3 4.6 4.8 4.6H13.4Q15.2 4.6 15.2 6.4V8.6L19.6 5.6Q20.6 5 20.6 6.2V13.8Q20.6 15 19.6 14.4L15.2 11.4V13.6Q15.2 15.4 13.4 15.4H6" fill="none" stroke="#d8353f" stroke-width="1.2" stroke-linejoin="round"/><path d="M1 19.6L21.4 1" stroke="#fff" stroke-width="2.6"/><path d="M1 19.6L21.4 1" stroke="#d8353f" stroke-width="1.2"/></svg>
<div class="av" style="top:351.3px;background:#1f9e84">Z</div>
<div class="pn" style="top:359.6px">Zakhar</div>
<svg class="abs" style="left:1839px;top:359px" width="20" height="21" viewBox="0 0 20 21"><rect x="7.1" y="2.4" width="6" height="9.6" rx="3" fill="none" stroke="#d8353f" stroke-width="1.2"/><path d="M4.6 9.4v.8a5.5 5.5 0 0 0 11 0v-.8" fill="none" stroke="#d8353f" stroke-width="1.2"/><path d="M10.1 15.8v2.6M7.4 18.6h5.4" stroke="#d8353f" stroke-width="1.2"/><path d="M1 20L18.6 0.8" stroke="#fff" stroke-width="2.6"/><path d="M1 20L18.6 0.8" stroke="#d8353f" stroke-width="1.2"/></svg>
<svg class="abs" style="left:1868px;top:359px" width="23" height="21" viewBox="0 0 23 21"><path d="M3 15.6V6.4Q3 4.6 4.8 4.6H13.4Q15.2 4.6 15.2 6.4V8.6L19.6 5.6Q20.6 5 20.6 6.2V13.8Q20.6 15 19.6 14.4L15.2 11.4V13.6Q15.2 15.4 13.4 15.4H6" fill="none" stroke="#d8353f" stroke-width="1.2" stroke-linejoin="round"/><path d="M1 19.6L21.4 1" stroke="#fff" stroke-width="2.6"/><path d="M1 19.6L21.4 1" stroke="#d8353f" stroke-width="1.2"/></svg>
<svg class="abs" style="left:1547.8px;top:402.8px" width="33.4" height="33.4" viewBox="0 0 34 34"><defs><clipPath id="av5"><rect width="34" height="34" rx="8.5"/></clipPath></defs><g clip-path="url(#av5)"><g filter="url(#avb)"><rect x="-3" y="-3" width="40" height="40" fill="#d9d9d9"/><ellipse cx="19" cy="14" rx="13.500" ry="14.500" fill="#70432a"/><ellipse cx="15" cy="8" rx="8" ry="5.500" fill="#a26c3c"/><ellipse cx="21" cy="18.500" rx="7.600" ry="9.400" fill="#d99b81"/><path d="M12 17C12 7 26 5 29 15C25 11 17 11 12 17Z" fill="#8a5630"/>
<path d="M11 37L14 27L29 27L34 37Z" fill="#d99c82"/><path d="M-2 37L2 29L12 26.500L14 37Z" fill="#2a3150"/><path d="M24 37L27 31L36 29L36 37Z" fill="#2a3150"/><path d="M17.500 23.600Q21 25 24.500 23.600" stroke="#b0605a" stroke-width=".9" fill="none"/></g></g></svg>
<div class="pn" style="top:410.7px">Алла Кізюн</div>
<svg class="abs" style="left:1839px;top:410px" width="20" height="21" viewBox="0 0 20 21"><rect x="7.1" y="2.4" width="6" height="9.6" rx="3" fill="none" stroke="#d8353f" stroke-width="1.2"/><path d="M4.6 9.4v.8a5.5 5.5 0 0 0 11 0v-.8" fill="none" stroke="#d8353f" stroke-width="1.2"/><path d="M10.1 15.8v2.6M7.4 18.6h5.4" stroke="#d8353f" stroke-width="1.2"/><path d="M1 20L18.6 0.8" stroke="#fff" stroke-width="2.6"/><path d="M1 20L18.6 0.8" stroke="#d8353f" stroke-width="1.2"/></svg>
<svg class="abs" style="left:1868px;top:410px" width="23" height="21" viewBox="0 0 23 21"><rect x="2.2" y="4.8" width="13.4" height="11.2" rx="2.2" fill="none" stroke="#6e7280" stroke-width="1.3"/><path d="M15.8 9L20 6Q20.8 5.6 20.8 6.6V14.2Q20.8 15.2 20 14.8L15.8 11.8" fill="none" stroke="#6e7280" stroke-width="1.3" stroke-linejoin="round"/></svg>
<div class="av" style="top:453.4px;background:#c8372d">А</div>
<div class="pn" style="top:461.7px">Анастасія Коршманюк</div>
<svg class="abs" style="left:1839px;top:461px" width="20" height="21" viewBox="0 0 20 21"><rect x="7.1" y="2.4" width="6" height="9.6" rx="3" fill="none" stroke="#d8353f" stroke-width="1.2"/><path d="M4.6 9.4v.8a5.5 5.5 0 0 0 11 0v-.8" fill="none" stroke="#d8353f" stroke-width="1.2"/><path d="M10.1 15.8v2.6M7.4 18.6h5.4" stroke="#d8353f" stroke-width="1.2"/><path d="M1 20L18.6 0.8" stroke="#fff" stroke-width="2.6"/><path d="M1 20L18.6 0.8" stroke="#d8353f" stroke-width="1.2"/></svg>
<svg class="abs" style="left:1868px;top:461px" width="23" height="21" viewBox="0 0 23 21"><path d="M3 15.6V6.4Q3 4.6 4.8 4.6H13.4Q15.2 4.6 15.2 6.4V8.6L19.6 5.6Q20.6 5 20.6 6.2V13.8Q20.6 15 19.6 14.4L15.2 11.4V13.6Q15.2 15.4 13.4 15.4H6" fill="none" stroke="#d8353f" stroke-width="1.2" stroke-linejoin="round"/><path d="M1 19.6L21.4 1" stroke="#fff" stroke-width="2.6"/><path d="M1 19.6L21.4 1" stroke="#d8353f" stroke-width="1.2"/></svg>
<div class="av" style="top:504.4px;background:#c8372d">А</div>
<div class="pn" style="top:512.7px">Анастасія Литус</div>
<svg class="abs" style="left:1839px;top:512px" width="20" height="21" viewBox="0 0 20 21"><rect x="7.1" y="2.4" width="6" height="9.6" rx="3" fill="none" stroke="#d8353f" stroke-width="1.2"/><path d="M4.6 9.4v.8a5.5 5.5 0 0 0 11 0v-.8" fill="none" stroke="#d8353f" stroke-width="1.2"/><path d="M10.1 15.8v2.6M7.4 18.6h5.4" stroke="#d8353f" stroke-width="1.2"/><path d="M1 20L18.6 0.8" stroke="#fff" stroke-width="2.6"/><path d="M1 20L18.6 0.8" stroke="#d8353f" stroke-width="1.2"/></svg>
<svg class="abs" style="left:1868px;top:512px" width="23" height="21" viewBox="0 0 23 21"><path d="M3 15.6V6.4Q3 4.6 4.8 4.6H13.4Q15.2 4.6 15.2 6.4V8.6L19.6 5.6Q20.6 5 20.6 6.2V13.8Q20.6 15 19.6 14.4L15.2 11.4V13.6Q15.2 15.4 13.4 15.4H6" fill="none" stroke="#d8353f" stroke-width="1.2" stroke-linejoin="round"/><path d="M1 19.6L21.4 1" stroke="#fff" stroke-width="2.6"/><path d="M1 19.6L21.4 1" stroke="#d8353f" stroke-width="1.2"/></svg>
<svg class="abs" style="left:1547.8px;top:555.8px" width="33.4" height="33.4" viewBox="0 0 34 34"><defs><clipPath id="av8"><rect width="34" height="34" rx="8.5"/></clipPath></defs><g clip-path="url(#av8)"><g filter="url(#avb)"><rect x="-3" y="-3" width="40" height="40" fill="#5d8f3f"/><path d="M8 -3L37 -3L37 8C28 6 24 10 18 8C12 6 12 2 8 -3Z" fill="#d5e1ee"/><circle cx="3" cy="14" r="7" fill="#4b8430"/><circle cx="5" cy="28" r="8" fill="#6a9a4a"/><circle cx="30" cy="14" r="5" fill="#86aa68"/><circle cx="30" cy="26" r="6" fill="#4f8835"/><circle cx="27" cy="20" r="3" fill="#d9ccd6"/>
<path d="M13.500 16C13 6 15.500 3 18 3C21 3 22.500 7 22 16Z" fill="#6a4836"/><ellipse cx="17.800" cy="9" rx="2.500" ry="3.500" fill="#d8ad99"/>
<path d="M7 37C7 22 11 15.500 14.500 15L22 15C26 16.500 28 22 27 37Z" fill="#d3b79f"/><rect x="10" y="19" width="3" height="18" fill="#8a5d48" opacity=".75"/><rect x="16.500" y="17" width="2.400" height="20" fill="#f3e8dc" opacity=".9"/><rect x="21.500" y="20" width="2.600" height="17" fill="#9a6a52" opacity=".65"/><rect x="7" y="24" width="20" height="3" fill="#a1765e" opacity=".5"/><ellipse cx="10" cy="33" rx="6" ry="3" fill="#9a5a7a" opacity=".7"/></g></g></svg>
<div class="pn" style="top:563.7px">Анна Севастьянова</div>
<svg class="abs" style="left:1839px;top:563px" width="20" height="21" viewBox="0 0 20 21"><rect x="7.1" y="2.4" width="6" height="9.6" rx="3" fill="none" stroke="#d8353f" stroke-width="1.2"/><path d="M4.6 9.4v.8a5.5 5.5 0 0 0 11 0v-.8" fill="none" stroke="#d8353f" stroke-width="1.2"/><path d="M10.1 15.8v2.6M7.4 18.6h5.4" stroke="#d8353f" stroke-width="1.2"/><path d="M1 20L18.6 0.8" stroke="#fff" stroke-width="2.6"/><path d="M1 20L18.6 0.8" stroke="#d8353f" stroke-width="1.2"/></svg>
<svg class="abs" style="left:1868px;top:563px" width="23" height="21" viewBox="0 0 23 21"><path d="M3 15.6V6.4Q3 4.6 4.8 4.6H13.4Q15.2 4.6 15.2 6.4V8.6L19.6 5.6Q20.6 5 20.6 6.2V13.8Q20.6 15 19.6 14.4L15.2 11.4V13.6Q15.2 15.4 13.4 15.4H6" fill="none" stroke="#d8353f" stroke-width="1.2" stroke-linejoin="round"/><path d="M1 19.6L21.4 1" stroke="#fff" stroke-width="2.6"/><path d="M1 19.6L21.4 1" stroke="#d8353f" stroke-width="1.2"/></svg>
<div class="av" style="top:606.5px;background:#2b7cc0">Б</div>
<div class="pn" style="top:614.8px">Бронзова Наталія</div>
<svg class="abs" style="left:1839px;top:614px" width="20" height="21" viewBox="0 0 20 21"><rect x="7.1" y="2.4" width="6" height="9.6" rx="3" fill="none" stroke="#d8353f" stroke-width="1.2"/><path d="M4.6 9.4v.8a5.5 5.5 0 0 0 11 0v-.8" fill="none" stroke="#d8353f" stroke-width="1.2"/><path d="M10.1 15.8v2.6M7.4 18.6h5.4" stroke="#d8353f" stroke-width="1.2"/><path d="M1 20L18.6 0.8" stroke="#fff" stroke-width="2.6"/><path d="M1 20L18.6 0.8" stroke="#d8353f" stroke-width="1.2"/></svg>
<svg class="abs" style="left:1868px;top:614px" width="23" height="21" viewBox="0 0 23 21"><path d="M3 15.6V6.4Q3 4.6 4.8 4.6H13.4Q15.2 4.6 15.2 6.4V8.6L19.6 5.6Q20.6 5 20.6 6.2V13.8Q20.6 15 19.6 14.4L15.2 11.4V13.6Q15.2 15.4 13.4 15.4H6" fill="none" stroke="#d8353f" stroke-width="1.2" stroke-linejoin="round"/><path d="M1 19.6L21.4 1" stroke="#fff" stroke-width="2.6"/><path d="M1 19.6L21.4 1" stroke="#d8353f" stroke-width="1.2"/></svg>
<svg class="abs" style="left:1547.8px;top:657.9px" width="33.4" height="33.4" viewBox="0 0 34 34"><defs><clipPath id="av10"><rect width="34" height="34" rx="8.5"/></clipPath></defs><g clip-path="url(#av10)"><g filter="url(#avb)"><rect x="-3" y="-3" width="40" height="40" fill="#6b5a38"/><rect x="-3" y="-3" width="40" height="12" fill="#c79a58"/><rect x="-3" y="6" width="40" height="6" fill="#8a7444"/><rect x="5" y="-3" width="2" height="30" fill="#3d3a24"/><rect x="11" y="-3" width="2" height="28" fill="#45402a"/><rect x="27" y="-3" width="2.400" height="30" fill="#3d3a24"/><circle cx="3" cy="16" r="6" fill="#4a4a2a"/><circle cx="32" cy="14" r="6" fill="#504c2c"/>
<path d="M9 37L12 18C13 14.500 15 13 17.500 13C21 13 24 15 25 19L27 37Z" fill="#b9b9be"/><ellipse cx="19" cy="11.500" rx="3" ry="3.600" fill="#c98f70"/><path d="M15 12C15 6 23.500 6 23 12.500C21.500 9 17 9 15 12Z" fill="#7a3520"/><path d="M22 14L28 9L29 11L24 17Z" fill="#c9a88e"/><rect x="-3" y="30" width="40" height="7" fill="#4a3f28" opacity=".6"/></g></g></svg>
<div class="pn" style="top:665.8px">Віка Атаманчук</div>
<svg class="abs" style="left:1839px;top:665px" width="20" height="21" viewBox="0 0 20 21"><rect x="7.1" y="2.4" width="6" height="9.6" rx="3" fill="none" stroke="#d8353f" stroke-width="1.2"/><path d="M4.6 9.4v.8a5.5 5.5 0 0 0 11 0v-.8" fill="none" stroke="#d8353f" stroke-width="1.2"/><path d="M10.1 15.8v2.6M7.4 18.6h5.4" stroke="#d8353f" stroke-width="1.2"/><path d="M1 20L18.6 0.8" stroke="#fff" stroke-width="2.6"/><path d="M1 20L18.6 0.8" stroke="#d8353f" stroke-width="1.2"/></svg>
<svg class="abs" style="left:1868px;top:665px" width="23" height="21" viewBox="0 0 23 21"><path d="M3 15.6V6.4Q3 4.6 4.8 4.6H13.4Q15.2 4.6 15.2 6.4V8.6L19.6 5.6Q20.6 5 20.6 6.2V13.8Q20.6 15 19.6 14.4L15.2 11.4V13.6Q15.2 15.4 13.4 15.4H6" fill="none" stroke="#d8353f" stroke-width="1.2" stroke-linejoin="round"/><path d="M1 19.6L21.4 1" stroke="#fff" stroke-width="2.6"/><path d="M1 19.6L21.4 1" stroke="#d8353f" stroke-width="1.2"/></svg>
<div class="av" style="top:708.5px;background:#1f9e84">В</div>
<div class="pn" style="top:716.8px">Віра Черниш</div>
<svg class="abs" style="left:1839px;top:716px" width="20" height="21" viewBox="0 0 20 21"><rect x="7.1" y="2.4" width="6" height="9.6" rx="3" fill="none" stroke="#d8353f" stroke-width="1.2"/><path d="M4.6 9.4v.8a5.5 5.5 0 0 0 11 0v-.8" fill="none" stroke="#d8353f" stroke-width="1.2"/><path d="M10.1 15.8v2.6M7.4 18.6h5.4" stroke="#d8353f" stroke-width="1.2"/><path d="M1 20L18.6 0.8" stroke="#fff" stroke-width="2.6"/><path d="M1 20L18.6 0.8" stroke="#d8353f" stroke-width="1.2"/></svg>
<svg class="abs" style="left:1868px;top:716px" width="23" height="21" viewBox="0 0 23 21"><path d="M3 15.6V6.4Q3 4.6 4.8 4.6H13.4Q15.2 4.6 15.2 6.4V8.6L19.6 5.6Q20.6 5 20.6 6.2V13.8Q20.6 15 19.6 14.4L15.2 11.4V13.6Q15.2 15.4 13.4 15.4H6" fill="none" stroke="#d8353f" stroke-width="1.2" stroke-linejoin="round"/><path d="M1 19.6L21.4 1" stroke="#fff" stroke-width="2.6"/><path d="M1 19.6L21.4 1" stroke="#d8353f" stroke-width="1.2"/></svg>
<div class="av" style="top:759.6px;background:#2b7cc0">В</div>
<div class="pn" style="top:767.9px">Володимир Коломієць</div>
<svg class="abs" style="left:1839px;top:767px" width="20" height="21" viewBox="0 0 20 21"><rect x="7.1" y="2.4" width="6" height="9.6" rx="3" fill="none" stroke="#d8353f" stroke-width="1.2"/><path d="M4.6 9.4v.8a5.5 5.5 0 0 0 11 0v-.8" fill="none" stroke="#d8353f" stroke-width="1.2"/><path d="M10.1 15.8v2.6M7.4 18.6h5.4" stroke="#d8353f" stroke-width="1.2"/><path d="M1 20L18.6 0.8" stroke="#fff" stroke-width="2.6"/><path d="M1 20L18.6 0.8" stroke="#d8353f" stroke-width="1.2"/></svg>
<svg class="abs" style="left:1868px;top:767px" width="23" height="21" viewBox="0 0 23 21"><path d="M3 15.6V6.4Q3 4.6 4.8 4.6H13.4Q15.2 4.6 15.2 6.4V8.6L19.6 5.6Q20.6 5 20.6 6.2V13.8Q20.6 15 19.6 14.4L15.2 11.4V13.6Q15.2 15.4 13.4 15.4H6" fill="none" stroke="#d8353f" stroke-width="1.2" stroke-linejoin="round"/><path d="M1 19.6L21.4 1" stroke="#fff" stroke-width="2.6"/><path d="M1 19.6L21.4 1" stroke="#d8353f" stroke-width="1.2"/></svg>
<svg class="abs" style="left:1547.8px;top:811.0px" width="33.4" height="33.4" viewBox="0 0 34 34"><defs><clipPath id="av13"><rect width="34" height="34" rx="8.5"/></clipPath></defs><g clip-path="url(#av13)"><g filter="url(#avb)"><rect x="-3" y="-3" width="40" height="40" fill="#e9e3d2"/><rect x="-3" y="-3" width="14" height="40" fill="#d2b03c"/><rect x="10" y="-3" width="4" height="40" fill="#efe9dc"/><rect x="13" y="-3" width="24" height="6" fill="#5a5340"/><rect x="30" y="-3" width="2" height="32" fill="#3a372c"/><rect x="22" y="6" width="10" height="1.600" fill="#3a372c"/>
<path d="M9 37C9 22 12 7 19 5C25 5 28 14 29 24L30 37Z" fill="#b99a72"/><ellipse cx="19.500" cy="13" rx="3.800" ry="5" fill="#d9b198"/><path d="M14.500 13C14 5 24 4.500 24.500 13C22.500 8.500 17 8.500 14.500 13Z" fill="#9b8468"/><path d="M12 12C11 20 11 26 13 30L15 22Z" fill="#6f5a7a" opacity=".6"/>
<path d="M5 37C7 28 11 23 15 21.500L18 37Z" fill="#1f2a26"/><path d="M16 37L18 22L22 22L25 37Z" fill="#2a3440"/><path d="M22 22C27 23 30 28 31 37L24 37Z" fill="#b7907a"/><path d="M12 26L17 24L16 30Z" fill="#6b8a3a"/></g></g></svg>
<div class="pn" style="top:818.9px">Єлизавета Кропив’янська</div>
<svg class="abs" style="left:1839px;top:818px" width="20" height="21" viewBox="0 0 20 21"><rect x="7.1" y="2.4" width="6" height="9.6" rx="3" fill="none" stroke="#d8353f" stroke-width="1.2"/><path d="M4.6 9.4v.8a5.5 5.5 0 0 0 11 0v-.8" fill="none" stroke="#d8353f" stroke-width="1.2"/><path d="M10.1 15.8v2.6M7.4 18.6h5.4" stroke="#d8353f" stroke-width="1.2"/><path d="M1 20L18.6 0.8" stroke="#fff" stroke-width="2.6"/><path d="M1 20L18.6 0.8" stroke="#d8353f" stroke-width="1.2"/></svg>
<svg class="abs" style="left:1868px;top:818px" width="23" height="21" viewBox="0 0 23 21"><path d="M3 15.6V6.4Q3 4.6 4.8 4.6H13.4Q15.2 4.6 15.2 6.4V8.6L19.6 5.6Q20.6 5 20.6 6.2V13.8Q20.6 15 19.6 14.4L15.2 11.4V13.6Q15.2 15.4 13.4 15.4H6" fill="none" stroke="#d8353f" stroke-width="1.2" stroke-linejoin="round"/><path d="M1 19.6L21.4 1" stroke="#fff" stroke-width="2.6"/><path d="M1 19.6L21.4 1" stroke="#d8353f" stroke-width="1.2"/></svg>
<svg class="abs" style="left:1547.8px;top:862.0px" width="33.4" height="33.4" viewBox="0 0 34 34"><defs><clipPath id="av14"><rect width="34" height="34" rx="8.5"/></clipPath></defs><g clip-path="url(#av14)"><g filter="url(#avb)"><rect x="-3" y="-3" width="40" height="40" fill="#2c3a2a"/><rect x="20" y="-3" width="17" height="12" fill="#d9e6ee"/><rect x="26" y="-3" width="11" height="18" fill="#3d5a34"/><path d="M-3 37C-3 14 4 0 16 0C28 0 34 12 35 37Z" fill="#70482f"/><ellipse cx="15.500" cy="16" rx="9.500" ry="11.500" fill="#e3b8a2"/><path d="M5 15C5 2 27 1 28 17C24 8 11 7 5 15Z" fill="#7c5236"/><path d="M26 10C32 16 34 28 32 37L24 37C28 28 28 18 26 10Z" fill="#8a5a3c"/><path d="M-3 20C0 26 2 32 8 37L-3 37Z" fill="#5a3926"/>
<path d="M9 13.600Q11.500 12.400 14 13.600" stroke="#4a3328" stroke-width=".9" fill="none"/><path d="M18 14Q20.500 12.800 23 14.200" stroke="#4a3328" stroke-width=".9" fill="none"/><path d="M11.500 23.500Q15 25.400 18.500 23.500" stroke="#b5645c" stroke-width="1.200" fill="none"/><path d="M4 37C6 31 12 29 17 30L26 37Z" fill="#e2cfc0"/></g></g></svg>
<div class="pn" style="top:869.9px">Інна Куцолабська</div>
<svg class="abs" style="left:1839px;top:869px" width="20" height="21" viewBox="0 0 20 21"><rect x="7.1" y="2.4" width="6" height="9.6" rx="3" fill="none" stroke="#d8353f" stroke-width="1.2"/><path d="M4.6 9.4v.8a5.5 5.5 0 0 0 11 0v-.8" fill="none" stroke="#d8353f" stroke-width="1.2"/><path d="M10.1 15.8v2.6M7.4 18.6h5.4" stroke="#d8353f" stroke-width="1.2"/><path d="M1 20L18.6 0.8" stroke="#fff" stroke-width="2.6"/><path d="M1 20L18.6 0.8" stroke="#d8353f" stroke-width="1.2"/></svg>
<svg class="abs" style="left:1868px;top:869px" width="23" height="21" viewBox="0 0 23 21"><path d="M3 15.6V6.4Q3 4.6 4.8 4.6H13.4Q15.2 4.6 15.2 6.4V8.6L19.6 5.6Q20.6 5 20.6 6.2V13.8Q20.6 15 19.6 14.4L15.2 11.4V13.6Q15.2 15.4 13.4 15.4H6" fill="none" stroke="#d8353f" stroke-width="1.2" stroke-linejoin="round"/><path d="M1 19.6L21.4 1" stroke="#fff" stroke-width="2.6"/><path d="M1 19.6L21.4 1" stroke="#d8353f" stroke-width="1.2"/></svg>
<div class="av" style="top:912.7px;background:#c8372d">І</div>
<div class="pn" style="top:921.0px">Іщенко Юлія</div>
<svg class="abs" style="left:1839px;top:920px" width="20" height="21" viewBox="0 0 20 21"><rect x="7.1" y="2.4" width="6" height="9.6" rx="3" fill="none" stroke="#d8353f" stroke-width="1.2"/><path d="M4.6 9.4v.8a5.5 5.5 0 0 0 11 0v-.8" fill="none" stroke="#d8353f" stroke-width="1.2"/><path d="M10.1 15.8v2.6M7.4 18.6h5.4" stroke="#d8353f" stroke-width="1.2"/><path d="M1 20L18.6 0.8" stroke="#fff" stroke-width="2.6"/><path d="M1 20L18.6 0.8" stroke="#d8353f" stroke-width="1.2"/></svg>
<svg class="abs" style="left:1868px;top:920px" width="23" height="21" viewBox="0 0 23 21"><path d="M3 15.6V6.4Q3 4.6 4.8 4.6H13.4Q15.2 4.6 15.2 6.4V8.6L19.6 5.6Q20.6 5 20.6 6.2V13.8Q20.6 15 19.6 14.4L15.2 11.4V13.6Q15.2 15.4 13.4 15.4H6" fill="none" stroke="#d8353f" stroke-width="1.2" stroke-linejoin="round"/><path d="M1 19.6L21.4 1" stroke="#fff" stroke-width="2.6"/><path d="M1 19.6L21.4 1" stroke="#d8353f" stroke-width="1.2"/></svg>

<div class="pbtn" style="left:1533px;width:111px">Пригласить</div>
<div class="pbtn" style="left:1656px;width:209px">Выключить звук для всех</div>
<div class="pbtn" style="left:1877px;width:29px;letter-spacing:1px;font-weight:bold;font-size:14px;line-height:22px">···</div>


<!-- ===== TASKBAR ===== -->


<div class="abs" style="left:0;top:1030px;width:1920px;height:50px;background:linear-gradient(90deg,#22363f 0%,#20333e 25%,#1f3040 45%,#1e2c3f 60%,#1c2b45 80%,#1b2a48 100%)"></div>
<!-- start -->
<svg class="abs" style="left:20px;top:1044px" width="21" height="21" viewBox="0 0 21 21"><path d="M0 3L8.6 1.8V9.8H0Z M9.8 1.6L20.4 0V9.8H9.8Z M0 11H8.6V19L0 17.8Z M9.8 11H20.4V20.8L9.8 19.2Z" fill="#fff"/></svg>
<!-- search -->
<div class="abs" style="left:60px;top:1031px;width:360px;height:49px;background:#f1f1f1;overflow:hidden">
<svg class="abs" style="left:258px;top:0" width="102" height="49" viewBox="0 0 102 49">
<ellipse cx="64" cy="53.500" rx="62" ry="10" fill="#6fbf4b"/>
<!-- owl left -->
<ellipse cx="36" cy="30" rx="12.5" ry="15" fill="#c9772f"/><ellipse cx="36" cy="34" rx="8" ry="10" fill="#ecd6e6"/><ellipse cx="36" cy="16" rx="11" ry="8.6" fill="#cf8236"/><circle cx="31.4" cy="16.6" r="3.6" fill="#f6e7c6"/><circle cx="40.6" cy="16.6" r="3.6" fill="#f6e7c6"/><circle cx="31.6" cy="16.8" r="2" fill="#6a2fa0"/><circle cx="40.4" cy="16.8" r="2" fill="#6a2fa0"/><path d="M34.8 19L36 22L37.2 19Z" fill="#f0b43c"/><path d="M25 8L29 12L26 13Z M47 8L43 12L46 13Z" fill="#b9642a"/><path d="M31 44l-1 3h4zM40 44l-1 3h4z" fill="#e9a23a"/>
<!-- owl right -->
<ellipse cx="66" cy="25" rx="13" ry="17" fill="#c9772f"/><ellipse cx="65" cy="30" rx="8.4" ry="11.5" fill="#ecd6e6"/><ellipse cx="66" cy="9.5" rx="11" ry="8.6" fill="#d38a3a"/><circle cx="61.4" cy="10" r="3.6" fill="#f6e7c6"/><circle cx="70.4" cy="10" r="3.6" fill="#f6e7c6"/><circle cx="61.8" cy="10.4" r="2" fill="#6a2fa0"/><circle cx="70" cy="10.4" r="2" fill="#6a2fa0"/><path d="M64.8 12.6L66 15.6L67.2 12.6Z" fill="#f0b43c"/><path d="M57 4Q66 0 75 4" fill="none" stroke="#f1c85a" stroke-width="1.2"/><path d="M61 41l-1 3h4zM70 41l-1 3h4z" fill="#e9a23a"/>
</svg>
</div>
<svg class="abs" style="left:74px;top:1044px" width="23" height="23" viewBox="0 0 23 23"><circle cx="14" cy="8.6" r="6.6" fill="none" stroke="#1b1b1b" stroke-width="1.5"/><path d="M9.4 13.4L1.6 21.4" stroke="#1b1b1b" stroke-width="1.6"/></svg>
<div class="t" id="poshuk" style="left:109.5px;top:1047px;font-size:18.2px;letter-spacing:1.1px;color:#353535">Пошук</div>
<!-- task view -->
<svg class="abs" style="left:439px;top:1044px" width="23" height="21" viewBox="0 0 23 21"><path d="M1 1.6H15.4M1 19.4H15.4" stroke="#fff" stroke-width="1.3"/><rect x="2.6" y="5" width="11.4" height="11" fill="none" stroke="#fff" stroke-width="1.3"/><path d="M19.6 1V20M17.6 8.4H21.6" stroke="#fff" stroke-width="1.3"/></svg>
<!-- floppy -->
<svg class="abs" style="left:499px;top:1040px" width="30" height="29" viewBox="0 0 30 29"><path d="M1 1H25L29 5V28H1Z" fill="#2b3fd2"/><rect x="8" y="1" width="14" height="8" fill="#c9d3f2"/><rect x="16" y="2" width="4" height="6" fill="#2b3fd2"/><rect x="4" y="12" width="22" height="15" fill="#f6e9ec"/><path d="M6 15H24M6 18H24M6 21H16" stroke="#e47f86" stroke-width="1.4"/><text x="16" y="26.4" font-family="Liberation Sans" font-size="7.4" font-weight="bold" fill="#222">64</text></svg>
<!-- store -->
<svg class="abs" style="left:560px;top:1039px" width="31" height="31" viewBox="0 0 31 31"><path d="M9.6 9V6.4Q9.6 2.4 15.5 2.4Q21.4 2.4 21.4 6.4V9" fill="none" stroke="#2aa5e8" stroke-width="1.8"/><path d="M1.4 8.6H29.6V26Q29.6 30 25.6 30H5.4Q1.4 30 1.4 26Z" fill="#f4f1ee"/><rect x="9.6" y="12.6" width="5.4" height="5.4" fill="#f25022"/><rect x="16" y="12.6" width="5.4" height="5.4" fill="#7fba00"/><rect x="9.6" y="19" width="5.4" height="5.4" fill="#00a4ef"/><rect x="16" y="19" width="5.4" height="5.4" fill="#ffb900"/></svg>
<!-- edge -->
<svg class="abs" style="left:622px;top:1039px" width="32" height="32" viewBox="0 0 32 32"><defs><linearGradient id="eg1" x1="0" y1="0" x2="1" y2="1"><stop offset="0" stop-color="#37c8a8"/><stop offset="1" stop-color="#1a8fd6"/></linearGradient><linearGradient id="eg2" x1="0" y1="0" x2="0" y2="1"><stop offset="0" stop-color="#1f7fd0"/><stop offset="1" stop-color="#0e4fa0"/></linearGradient></defs><circle cx="16" cy="16" r="15" fill="url(#eg2)"/><path d="M1.2 14C2.4 6 8.6 1 16 1C24.6 1 31 7.6 31 14.6C31 19.4 27.4 21.6 23.6 21.6C20.6 21.6 19 20.4 19.4 19C20 17.6 20.8 17 20.6 14.8C20.4 12 17.6 10 14.6 10C8 10 4.6 15.4 4.8 20.4C2.6 18.6 1 16 1.2 14Z" fill="url(#eg1)"/><path d="M11 17.6C10.4 23 14.4 27.8 20 28.6C24 29 27.4 27 29 24.4C26 26 20.4 25.6 17 22.6C14.4 20.4 14 17.4 14.6 15.4C12.6 15.4 11.2 16.4 11 17.6Z" fill="#0c3f86" opacity=".85"/></svg>
<!-- zoom active -->
<div class="abs" style="left:670px;top:1030px;width:58px;height:50px;background:#45555f"></div>
<div class="abs" style="left:728px;top:1030px;width:4px;height:50px;background:#3a4a55"></div>
<div class="abs" style="left:670px;top:1078px;width:58px;height:2px;background:#8bbbe4"></div>
<div class="abs" style="left:729px;top:1078px;width:3px;height:2px;background:#6e98bd"></div>
<div class="abs" style="left:684.5px;top:1039.5px;width:31px;height:31px;border-radius:50%;background:linear-gradient(180deg,#1f6bff,#0b4fe8)"></div>
<div class="t" style="left:684.5px;top:1050.5px;width:31px;text-align:center;font-size:8.4px;font-weight:bold;color:#fff;letter-spacing:-.2px">zoom</div>
<!-- chrome -->
<svg class="abs" style="left:746px;top:1039px" width="32" height="32" viewBox="0 0 32 32"><circle cx="16" cy="16" r="15" fill="#fff"/><path d="M16 16L3 8.5A15 15 0 0 1 29 8.5Z" fill="#e23a2e"/><path d="M16 16L29 8.500A15 15 0 0 1 16 31Z" fill="#f9bf12"/><path d="M16 16L16 31A15 15 0 0 1 3 8.5Z" fill="#2a9d4a"/><path d="M16 9H28.6" stroke="#e23a2e" stroke-width="1"/><circle cx="16" cy="16" r="7" fill="#fff"/><circle cx="16" cy="16" r="5.4" fill="#3f7fe8"/></svg>
<!-- telegram -->
<svg class="abs" style="left:809px;top:1040px" width="29" height="29" viewBox="0 0 29 29"><circle cx="14.5" cy="14.5" r="14" fill="#2a9fda"/><path d="M5.6 14.2L21.6 7.8Q22.8 7.4 22.4 9L19.8 21Q19.4 22.4 18.2 21.6L13.8 18.4L11.8 20.4Q11.2 21 11 20L10.2 16.4L5.8 15.2Q4.8 14.6 5.6 14.2Z" fill="#fff"/><path d="M10.2 16.4L19.4 10.2L12.2 17.6L11.4 20.4Z" fill="#c6def0"/></svg>
<!-- viber -->
<svg class="abs" style="left:870px;top:1038px" width="31" height="33" viewBox="0 0 31 33"><path d="M9 2H22Q29.6 2 29.6 9.6V16.4Q29.6 24 22 24H15L10.4 30.6Q9.6 31.6 9.6 30.2V24Q1.4 23.6 1.4 16.4V9.6Q1.4 2 9 2Z" fill="#7360f2" stroke="#e9e4ff" stroke-width="1.6"/><path d="M10.6 8.4Q9 8.6 9 10.2Q9.6 14.4 12.6 17.2Q15.8 20 19.6 20.4Q21.4 20.2 21.4 18.6L19 16.6L17.4 17.4Q13.8 16 12.6 12.4L13.6 11Z" fill="#fff"/><path d="M15.4 7.4Q21.6 8 22.2 14.2M15.8 10Q19.4 10.6 19.8 14" fill="none" stroke="#fff" stroke-width="1.1" stroke-linecap="round"/></svg>
<!-- chrome profile -->
<svg class="abs" style="left:932px;top:1039px" width="32" height="33" viewBox="0 0 32 33"><circle cx="16" cy="16" r="15" fill="#fff"/><path d="M16 16L3 8.5A15 15 0 0 1 29 8.5Z" fill="#e23a2e"/><path d="M16 16L29 8.5A15 15 0 0 1 16 31Z" fill="#f9bf12"/><path d="M16 16L16 31A15 15 0 0 1 3 8.5Z" fill="#2a9d4a"/><circle cx="16" cy="16" r="7" fill="#fff"/><circle cx="16" cy="16" r="5.4" fill="#3f7fe8"/><circle cx="23.4" cy="24.4" r="8" fill="#2a1c1c"/><ellipse cx="23.6" cy="22.6" rx="3" ry="3.8" fill="#d9a791"/><path d="M17 30C18 26 21 25.6 23.4 25.6C26 25.6 29 26 30 30Z" fill="#7a2f3a"/><path d="M19.8 22C20 17 27.4 17 27.6 22.4C26 19.6 21.6 19.6 19.8 22Z" fill="#1c1214"/></svg>
<div class="abs" style="left:923px;top:1078px;width:50px;height:2px;background:#8bbbe4"></div>
<!-- word -->
<svg class="abs" style="left:994px;top:1040px" width="30" height="30" viewBox="0 0 30 30"><rect x="1" y="1" width="27" height="27" fill="#e9eef8"/><rect x="1" y="1" width="27" height="6" fill="#c9d8f2"/><path d="M14 20L29 16V28H12Z" fill="#f7f9fd" stroke="#b8c6e0" stroke-width=".6"/><text x="2.6" y="21.6" font-family="Liberation Sans" font-size="21" font-weight="bold" fill="#1f55b8">W</text></svg>
<div class="abs" style="left:985px;top:1078px;width:50px;height:2px;background:#8bbbe4"></div>
<!-- tray -->
<div class="abs" style="left:1504px;top:1042px;width:26px;height:26px;border-radius:50%;background:radial-gradient(circle at 35% 30%,#fbb63a 0%,#f8952a 55%,#f2701c 100%)"></div>
<div class="t" id="wth" style="left:1541.5px;top:1047px;font-size:17px;color:#fff">24°C</div><div class="t" id="wth2" style="left:1590px;top:1047px;font-size:17px;color:#fff">Sunny</div>
<svg class="abs" style="left:1669px;top:1049px" width="18" height="11" viewBox="0 0 18 11"><path d="M1 10L9 2L17 10" fill="none" stroke="#fff" stroke-width="1.4"/></svg>
<svg class="abs" style="left:1700px;top:1044px" width="16" height="22" viewBox="0 0 16 22"><rect x="4.2" y="1" width="7.6" height="13" rx="3.8" fill="#fff"/><path d="M1.6 10v1.4a6.4 6.4 0 0 0 12.8 0V10" fill="none" stroke="#fff" stroke-width="1.2"/><path d="M8 17.8V21M5 21h6" stroke="#fff" stroke-width="1.2"/></svg>
<div class="t" id="ukr" style="left:1732px;top:1049px;font-size:14px;color:#fff">УКР</div>
<div class="t" id="clk" style="left:1777px;top:1037px;width:69px;text-align:center;font-size:14px;color:#fff">13:06</div>
<div class="t" id="dat" style="left:1772px;top:1060.5px;width:79px;text-align:center;font-size:14px;color:#fff">10.04.2024</div>
<svg class="abs" style="left:1868px;top:1044px" width="32" height="32" viewBox="0 0 32 32"><path d="M1.6 1.6H21.4V16H8L1.6 21Z" fill="#fff"/><path d="M5 6H18M5 9.4H18M5 12.8H14" stroke="#1c2b45" stroke-width="1.2"/><circle cx="20" cy="20.4" r="8.6" fill="#2a2f3c" stroke="#cfd3da" stroke-width="1.3"/><text x="20" y="25" font-family="Liberation Sans" font-size="12.5" font-weight="bold" fill="#fff" text-anchor="middle">3</text></svg>
<div class="abs" style="left:1914px;top:1030px;width:1px;height:50px;background:#5a6675"></div>


</div>
</body>
</html>
